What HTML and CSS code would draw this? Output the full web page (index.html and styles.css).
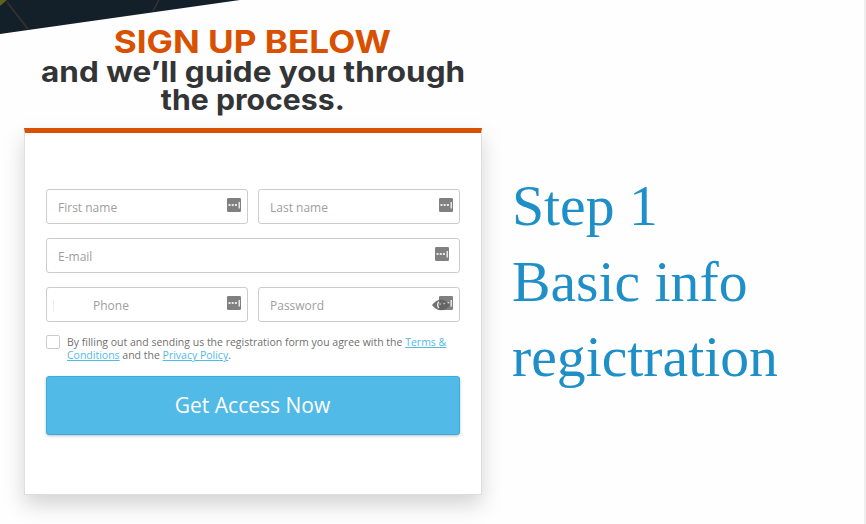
FILE: index.html
```html
<!DOCTYPE html>
<html lang="en">
<head>
<meta charset="utf-8">
<title>Sign up</title>
<link rel="stylesheet" href="styles.css">
</head>
<body>
<svg class="banner" width="260" height="36" viewBox="0 0 260 36" aria-hidden="true">
  <path d="M0 0H240Q120 17 0 34Z" fill="#13202a"/>
  <path d="M0 0H7L0 6Z" fill="#62601d"/>
  <path d="M7 2L28 29M159 0L153 11" stroke="#3b3230" stroke-width="1.5" fill="none"/>
</svg>
<svg class="sprite" width="0" height="0" aria-hidden="true">
  <symbol id="key" viewBox="0 0 14 14">
    <rect width="14" height="14" rx="1.2" fill="#808080"/>
    <path d="M1.500 6h2v2h-2zM4.700 6h2v2h-2zM7.900 6h2v2h-2zM11.500 4h1.500v6.500h-1.500z" fill="#e8e8e8"/>
  </symbol>
</svg>
<main class="page">
  <section class="signup">
    <h1 class="heading">
      <span class="accent">SIGN UP BELOW</span>
      <span class="line one">and we’ll guide you through</span>
      <span class="line two">the process.</span>
    </h1>
    <form class="card">
      <div class="row">
        <div class="field"><span class="label">First name</span><svg class="key"><use href="#key"/></svg></div>
        <div class="field"><span class="label">Last name</span><svg class="key"><use href="#key"/></svg></div>
      </div>
      <div class="row single">
        <div class="field email"><span class="label">E-mail</span><svg class="key"><use href="#key"/></svg></div>
      </div>
      <div class="row">
        <div class="field phone"><i class="divider"></i><span class="label">Phone</span><svg class="key"><use href="#key"/></svg></div>
        <div class="field"><span class="label">Password</span><svg class="key"><use href="#key"/></svg>
          <svg class="eye" width="18" height="12" viewBox="0 0 18 12"><path d="M0 6Q4 .7 9 .7T18 6Q14 11.300 9 11.300T0 6Z" fill="#606060" fill-opacity=".88"/><path d="M7 2.700Q4.200 6 7 9" fill="none" stroke="#eee" stroke-width="1.300"/><path d="M7.500 4.500h1.200v1.200H7.500zM11.500 4h1.200v1.200h-1.200z" fill="#ddd"/></svg>
        </div>
      </div>
      <div class="agree">
        <span class="check"></span>
        <p class="terms">By filling out and sending us the registration form you agree with the <a>Terms &amp;</a><br><a>Conditions</a> and the <a>Privacy Policy</a>.</p>
      </div>
      <div class="button"><span class="caption">Get Access Now</span></div>
    </form>
  </section>
  <aside class="step">Step 1<br>Basic info<br>regictration</aside>
</main>
</body>
</html>
```
FILE: styles.css
```css
* { box-sizing: border-box; }
body { margin: 0; background: #fefefe; overflow: hidden; font-family: "Open Sans", sans-serif; }
.banner { position: absolute; top: 0; left: 0; }
.sprite { position: absolute; }
.page { display: flex; height: 524px; border-right: 2px solid #eee; }
.signup { width: 458px; margin-left: 24px; padding-top: 25px; }
.heading { height: 103px; margin: 0; display: flex; flex-direction: column; align-items: center; font-family: Inter, sans-serif; font-weight: 700; color: #333436; white-space: nowrap; }
.accent { margin-right: 1px; color: #d85000; font-size: 31.5px; line-height: 34px; margin-bottom: -1px; transform: scaleX(1.115); }
.line { font-size: 28.5px; line-height: 28px; transform: scaleX(1.104); }
.two { transform: scaleX(1.06); }
.card { height: 367px; padding: 56px 21px 0; border: 1px solid #dedede; border-top: 5px solid #d85000; background: #fff; box-shadow: 0 10px 20px rgba(0,0,0,.17); }
.row { display: grid; grid-template-columns: 202px 202px; gap: 10px; margin-bottom: 14px; }
.single { grid-template-columns: 414px; }
.field { position: relative; height: 35px; display: flex; align-items: center; padding: 2px 12px 0 11px; border: 1px solid #ccc; border-radius: 3px; color: #9e9e9e; font-size: 12px; }
.key { position: absolute; right: 6px; top: 8px; width: 14px; height: 14px; }
.email .key { right: 10px; }
.eye { position: absolute; right: 9px; top: 11px; }
.phone { padding-left: 6px; }
.divider { width: 1px; height: 12px; margin-right: 39px; background: #eee; }
.agree { display: flex; height: 40px; }
.check { width: 14px; height: 14px; margin: -1px 7px 0 0; border: 1px solid #ccc; border-radius: 2px; }
.terms { margin: 0; font-size: 10.5px; line-height: 13px; color: #707070; white-space: nowrap; }
.terms a { color: #51bae6; text-decoration: underline; }
.button { height: 59px; display: flex; align-items: center; justify-content: center; padding: 0 1px 2px 0; border: 1px solid #36aee0; border-radius: 3px; background: #51bae6; color: #fff; font-size: 21px; box-shadow: 0 1px 3px rgba(0,0,0,.25); }
.step { margin: 168px 0 0 30px; font: 57.7px/75.5px "Liberation Serif", serif; color: #1f8fc8; white-space: nowrap; }
```
